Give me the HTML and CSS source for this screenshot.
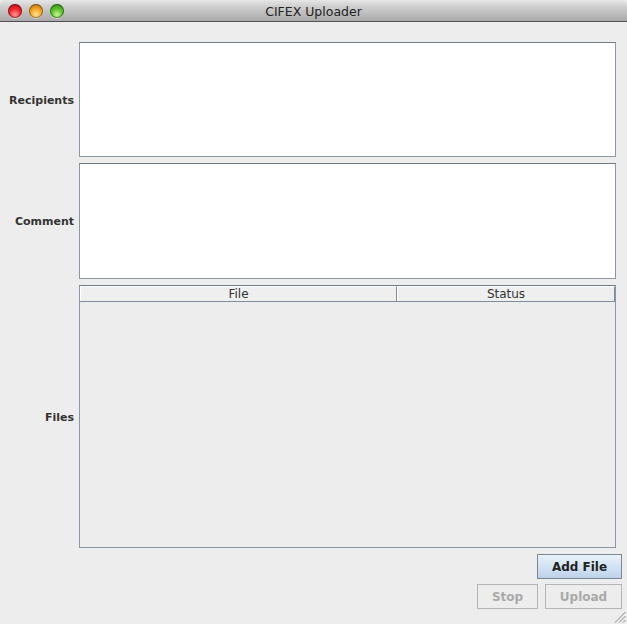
FILE: index.html
```html
<!DOCTYPE html>
<html>
<head>
<meta charset="utf-8">
<title>CIFEX Uploader</title>
<link rel="stylesheet" href="styles.css">
</head>
<body>
<div class="window">
  <div class="titlebar">
    <div class="lights">
      <span class="light red"></span>
      <span class="light orange"></span>
      <span class="light green"></span>
    </div>
    <div class="title">CIFEX Uploader</div>
  </div>
  <div class="content">
    <div class="form">
      <label class="label">Recipients</label>
      <div class="textbox recipients"></div>
      <label class="label">Comment</label>
      <div class="textbox comment"></div>
      <label class="label">Files</label>
      <div class="table">
        <div class="thead">
          <div class="th th-file">File</div>
          <div class="th th-status">Status</div>
        </div>
        <div class="tbody"></div>
      </div>
    </div>
    <div class="actions">
      <div class="row">
        <button class="btn primary">Add File</button>
      </div>
      <div class="row">
        <button class="btn disabled stop">Stop</button>
        <button class="btn disabled upload">Upload</button>
      </div>
    </div>
  </div>
  <svg class="grip" width="12" height="12" viewBox="0 0 12 12">
    <line x1="11.5" y1="1" x2="1" y2="11.5" stroke="#8a8a8a" stroke-width="1"/>
    <line x1="11.5" y1="5" x2="5" y2="11.5" stroke="#8a8a8a" stroke-width="1"/>
    <line x1="11.5" y1="9" x2="9" y2="11.5" stroke="#8a8a8a" stroke-width="1"/>
  </svg>
</div>
</body>
</html>
```
FILE: styles.css
```css
* { box-sizing: border-box; }
html, body {
  margin: 0;
  padding: 0;
  width: 627px;
  height: 624px;
  overflow: hidden;
  background: #ededed;
  font-family: "DejaVu Sans", "Liberation Sans", sans-serif;
}
.window {
  position: relative;
  width: 627px;
  height: 624px;
  background: #ededed;
}
.titlebar {
  position: relative;
  height: 22px;
  background: linear-gradient(#e6e6e6 0%, #cfcfcf 30%, #a9a9a9 100%);
  border-bottom: 1px solid #505050;
  border-radius: 5px 5px 0 0;
  display: flex;
  align-items: center;
  justify-content: center;
}
.lights {
  position: absolute;
  left: 8px;
  top: 4px;
  display: flex;
  gap: 7px;
}
.light {
  width: 14px;
  height: 14px;
  border-radius: 50%;
  box-shadow: inset 0 0 0 1px rgba(0,0,0,0.35), 0 1px 0 rgba(255,255,255,0.4);
}
.red { background: radial-gradient(circle at 50% 75%, #ff9a9a 0%, #f0262b 45%, #a8080c 100%); }
.orange { background: radial-gradient(circle at 50% 75%, #ffe29a 0%, #f5a623 45%, #a85e07 100%); }
.green { background: radial-gradient(circle at 50% 75%, #c8f59a 0%, #5cc12a 45%, #2a7a0a 100%); }
.title {
  font-size: 12.5px;
  color: #222;
  padding-top: 1px;
}
.content {
  padding: 20px 11px 0 0;
}
.form {
  display: grid;
  grid-template-columns: 74px 537px;
  grid-template-rows: 115px 116px 263px;
  column-gap: 5px;
  row-gap: 6px;
}
.label {
  display: flex;
  align-items: center;
  justify-content: flex-end;
  font-weight: bold;
  font-size: 11px;
  color: #333;
  padding-top: 1px;
}
.textbox {
  background: #fff;
  border: 1px solid #8a97a4;
  border-top-color: #6f7c88;
}
.table {
  border: 1px solid #8a97a4;
  border-top-color: #6f7c88;
  background: #ededed;
  display: flex;
  flex-direction: column;
}
.thead {
  display: flex;
  height: 16px;
  border-bottom: 1px solid #7f8c99;
  background: #efefef;
}
.th {
  font-size: 12px;
  color: #333;
  text-align: center;
  line-height: 15px;
  border-top: 1px solid #fff;
}
.th-file {
  width: 317px;
  border-right: 1px solid #7f8c99;
  border-left: 1px solid #fff;
}
.th-status {
  flex: 1;
  border-left: 1px solid #fff;
  border-right: 1px solid #7f8c99;
}
.tbody { flex: 1; }
.actions {
  display: flex;
  flex-direction: column;
  align-items: flex-end;
  gap: 5px;
  padding-top: 6px;
  margin-right: -6px;
}
.row {
  display: flex;
  gap: 7px;
}
.btn {
  height: 25px;
  font-family: "DejaVu Sans", "Liberation Sans", sans-serif;
  font-size: 12px;
  font-weight: bold;
  border-radius: 0;
  padding: 0;
}
.primary {
  width: 85px;
  color: #222;
  border: 1px solid #7b8896;
  background: linear-gradient(#e9f1fa 0%, #d3e3f4 50%, #bdd2ea 100%);
}
.disabled {
  color: #a9a9a9;
  border: 1px solid #b5b5b5;
  background: #ededed;
}
.stop { width: 61px; }
.upload { width: 77px; }
.grip {
  position: absolute;
  right: 1px;
  bottom: 1px;
}
```
